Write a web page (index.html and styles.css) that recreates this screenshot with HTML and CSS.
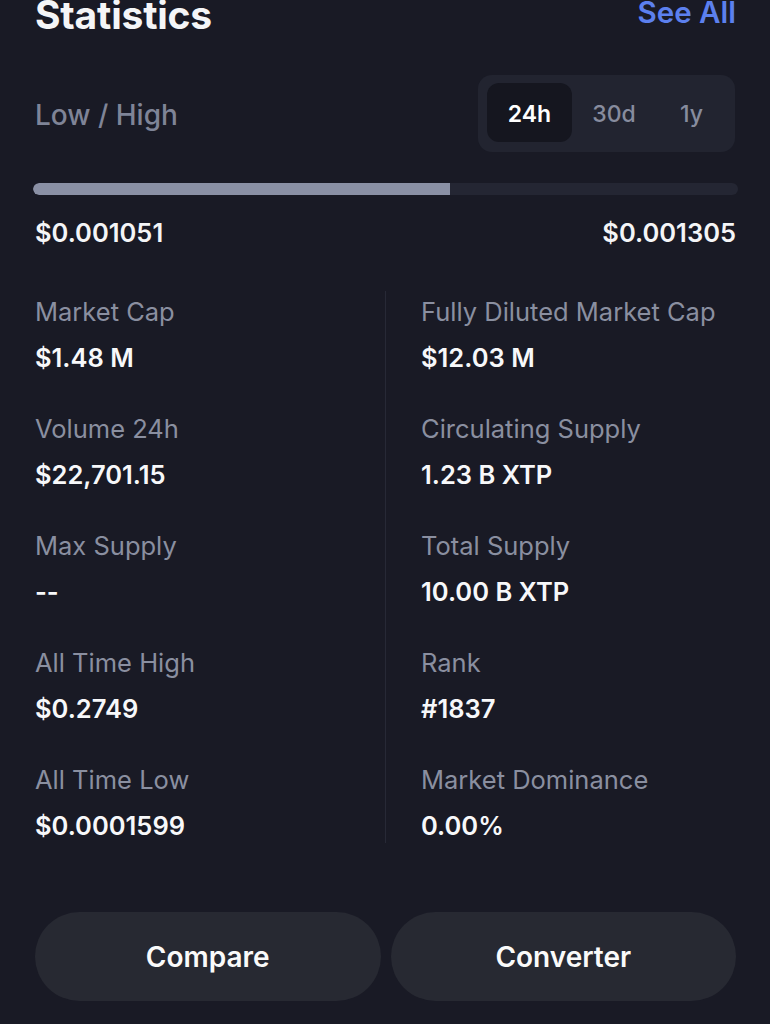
FILE: index.html
```html
<!DOCTYPE html>
<html lang="en">
<head>
<meta charset="utf-8">
<title>Statistics</title>
<link rel="stylesheet" href="styles.css">
</head>
<body>
<main class="page">
  <header class="head">
    <h1 class="title">Statistics</h1>
    <a class="see-all">See All</a>
  </header>

  <section class="range-head">
    <span class="range-label">Low / High</span>
    <div class="seg">
      <span class="seg-item w24 active">24h</span>
      <span class="seg-item w30">30d</span>
      <span class="seg-item w1">1y</span>
    </div>
  </section>

  <div class="bar"><div class="bar-fill" style="width:59.2%"></div></div>
  <div class="range-values">
    <span>$0.001051</span>
    <span>$0.001305</span>
  </div>

  <section class="grid">
    <div class="col">
      <div class="cell"><div class="label">Market Cap</div><div class="value">$1.48 M</div></div>
      <div class="cell"><div class="label">Volume 24h</div><div class="value">$22,701.15</div></div>
      <div class="cell"><div class="label">Max Supply</div><div class="value">--</div></div>
      <div class="cell"><div class="label">All Time High</div><div class="value">$0.2749</div></div>
      <div class="cell"><div class="label">All Time Low</div><div class="value">$0.0001599</div></div>
    </div>
    <div class="divider"></div>
    <div class="col right">
      <div class="cell"><div class="label">Fully Diluted Market Cap</div><div class="value">$12.03 M</div></div>
      <div class="cell"><div class="label">Circulating Supply</div><div class="value">1.23 B XTP</div></div>
      <div class="cell"><div class="label">Total Supply</div><div class="value">10.00 B XTP</div></div>
      <div class="cell"><div class="label">Rank</div><div class="value">#1837</div></div>
      <div class="cell"><div class="label">Market Dominance</div><div class="value">0.00%</div></div>
    </div>
  </section>

  <div class="actions">
    <button class="btn">Compare</button>
    <button class="btn">Converter</button>
  </div>
</main>
</body>
</html>
```

FILE: styles.css
```css
* { box-sizing: border-box; }
html, body {
  margin: 0;
  padding: 0;
  background: #191a25;
  height: 100%;
  overflow: hidden;
}
body {
  font-family: Inter, "Noto Sans", sans-serif;
  color: #f4f5f7;
}
.page {
  padding: 0 34px 0 35px;
}
.head {
  display: flex;
  justify-content: space-between;
  align-items: flex-start;
  margin-top: -8px;
  height: 54px;
}
.title {
  margin: 0;
  font-size: 39px;
  font-weight: 700;
  line-height: 46px;
  letter-spacing: -0.2px;
}
.see-all {
  color: #5c80ee;
  font-size: 29.5px;
  font-weight: 600;
  line-height: 40px;
}
.range-head {
  display: flex;
  justify-content: space-between;
  align-items: center;
  margin-top: 29px;
}
.range-label {
  color: #7f8497;
  font-size: 28px;
  font-weight: 500;
  padding-top: 3px;
}
.seg {
  display: flex;
  background: #222430;
  border-radius: 14px;
  padding: 8px 8px 10px 9px;
  height: 77px;
  margin-right: 1px;
}
.seg-item {
  display: flex;
  align-items: center;
  justify-content: center;
  font-size: 23px;
  font-weight: 500;
  color: #878c9e;
  border-radius: 12px;
  padding-top: 2px;
}
.w24 { width: 85px; }
.w30 { width: 84px; }
.w1 { width: 71px; }
.seg-item.active {
  background: #15161f;
  color: #ffffff;
  font-weight: 600;
}
.bar {
  margin: 31px -2px 0 -2px;
  height: 12px;
  background: #242633;
  border-radius: 6px;
  overflow: hidden;
}
.bar-fill {
  height: 100%;
  background: #8a90a5;
  border-radius: 6px 0 0 6px;
}
.range-values {
  display: flex;
  justify-content: space-between;
  margin-top: 23px;
  font-size: 25.5px;
  font-weight: 600;
  line-height: 30px;
}
.grid {
  display: grid;
  grid-template-columns: 350px 1px 1fr;
  margin-top: 43px;
}
.col {
  display: flex;
  flex-direction: column;
  gap: 41px;
  padding: 6px 0 2px;
}
.col.right { padding-left: 35px; }
.divider { background: #272936; }
.label {
  color: #8a8fa0;
  font-size: 25.5px;
  line-height: 30px;
}
.value {
  margin-top: 16px;
  font-size: 25.5px;
  font-weight: 600;
  line-height: 30px;
  color: #f7f8fa;
}
.actions {
  display: grid;
  grid-template-columns: 1fr 1fr;
  gap: 10px;
  margin-top: 69px;
}
.btn {
  height: 89px;
  border: none;
  border-radius: 45px;
  background: #272932;
  color: #fafafa;
  font-family: Inter, "Noto Sans", sans-serif;
  font-size: 28px;
  font-weight: 600;
}
```
